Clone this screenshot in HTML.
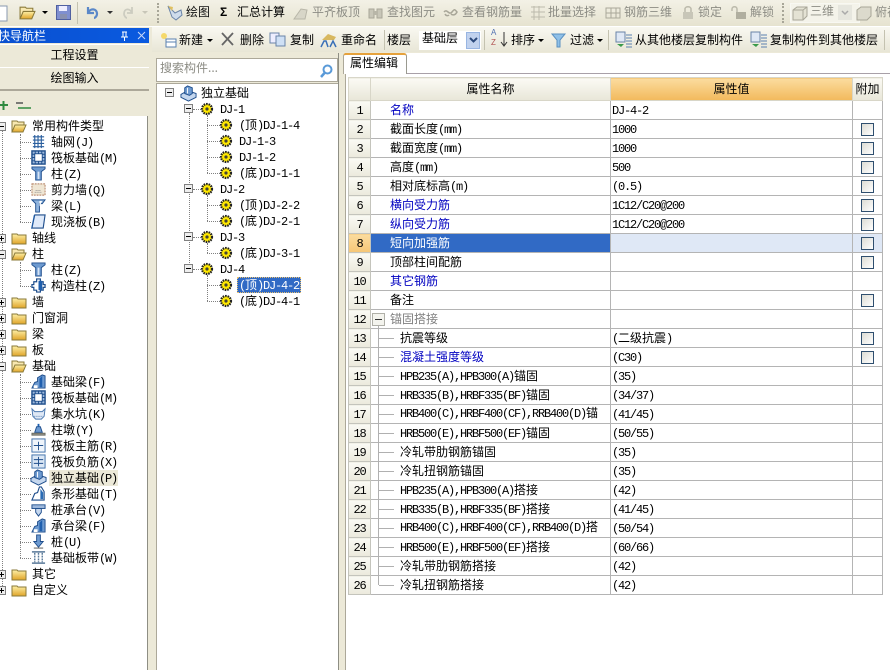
<!DOCTYPE html>
<html><head><meta charset="utf-8">
<style>
html,body{margin:0;padding:0;width:890px;height:670px;overflow:hidden;background:#ece9d8}
body{position:relative;font-family:"WenQuanYi Zen Hei","Noto Sans CJK SC",sans-serif;font-size:12px;color:#000}
.a{position:absolute}
.t{position:absolute;white-space:nowrap;line-height:16px;height:16px}
b{font-family:"Liberation Mono",monospace;font-weight:normal;font-size:12px;letter-spacing:-1.2px;line-height:12px}
.g{color:#8c8c84}
svg{position:absolute;overflow:visible}
table{position:absolute;left:348px;top:77px;border-collapse:collapse;table-layout:fixed;width:534px;background:#fff}
td,th{border:1px solid #b4b4b4;padding:0;height:18px;line-height:14px;white-space:nowrap;overflow:hidden;font-weight:normal;position:relative;vertical-align:middle}
tr.h th{height:22px;border-color:#d8d6c8;background:linear-gradient(#fbfaf4,#e8e6d8)}
tr.h th.v{background:linear-gradient(#fbdc9f,#f2b95c)}
td.n{background:linear-gradient(#fafaf4,#ebe9dc);text-align:center;border-color:#c4c4bc}
td.c{padding-left:19px}
td.s{padding-left:29px}
td.v{padding-left:1px}
td.bl{color:#0000c0}
.hl{background:#316ac5!important;color:#fff}
.cb{position:absolute;left:8px;top:3px;width:11px;height:11px;border:1px solid #2f4f6f;background:linear-gradient(135deg,#dcdcd4,#fff)}
.u{position:relative;top:-1px}
.vl{position:absolute;border-left:1px dotted #808080;width:0}
.hd{position:absolute;border-top:1px dotted #808080;height:0}
</style></head><body>
<svg width="0" height="0" style="position:absolute"><defs>
<linearGradient id="fy" x1="0" y1="0" x2="0" y2="1"><stop offset="0" stop-color="#fdf0a8"/><stop offset="1" stop-color="#e0a428"/></linearGradient>
<symbol id="fc" viewBox="0 0 16 16"><path d="M1 4h5l1 1h8v9H1z" fill="url(#fy)" stroke="#8a7a3a"/></symbol>
<symbol id="fo" viewBox="0 0 16 16"><path d="M1 14V3h5l1 1h6v3" fill="#f8e8b0" stroke="#8a7a3a"/><path d="M1 14l3-7h11l-3 7z" fill="url(#fy)" stroke="#8a7a3a"/></symbol>
<symbol id="pl" viewBox="0 0 9 9"><rect x=".5" y=".5" width="8" height="8" fill="#eee" stroke="#808080"/><path d="M2 4.5h5M4.5 2v5" stroke="#000"/></symbol>
<symbol id="mi" viewBox="0 0 9 9"><rect x=".5" y=".5" width="8" height="8" fill="#eee" stroke="#808080"/><path d="M2 4.5h5" stroke="#000"/></symbol>
<symbol id="gr" viewBox="0 0 14 14"><circle cx="7" cy="7" r="5" fill="#ffe800" stroke="#222" stroke-width="2.200" stroke-dasharray="1.600 .9"/><circle cx="7" cy="7" r="1.600" fill="#443"/></symbol>
<symbol id="gd" viewBox="0 0 16 16"><path d="M2 3h12M2 6.500h12M2 10h12M2 13.500h12M4 1v14M7.500 1v14M11 1v14" stroke="#2a5f9e" stroke-width="1.200" fill="none"/></symbol>
<symbol id="rf" viewBox="0 0 16 16"><rect x="1" y="1" width="14" height="14" fill="#9db8dc" stroke="#1f4e8c" stroke-width="1.500"/><rect x="4" y="4" width="8" height="8" fill="#fff" stroke="#1f4e8c"/><path d="M1 4.500h3M1 8h3M1 11.500h3M12 4.500h3M12 8h3M12 11.500h3M4.500 1v3M8 1v3M11.500 1v3M4.500 12v3M8 12v3M11.500 12v3" stroke="#1f4e8c"/></symbol>
<symbol id="co" viewBox="0 0 16 16"><path d="M1 1h14v2l-4 3v9H5V6L1 3z" fill="#6d9ad0" stroke="#1f4e8c"/><path d="M7 6h2v8H7z" fill="#d6e4f5"/></symbol>
<symbol id="wl" viewBox="0 0 16 16"><rect x="1" y="2" width="14" height="12" fill="#efe6d4" stroke="#b07a5a" stroke-dasharray="2 1"/><path d="M4 11h8M5 9h6" stroke="#888" stroke-dasharray="1 1"/></symbol>
<symbol id="bm" viewBox="0 0 16 16"><path d="M1 2h14l-3 4H9v9H5V6L1 2z" fill="#8fb4de" stroke="#1f4e8c"/><path d="M9 3l3 0-3 6z" fill="#fff"/></symbol>
<symbol id="sl" viewBox="0 0 16 16"><path d="M4 1h11l-2 14H1z" fill="#dfeafa" stroke="#1f4e8c" stroke-width="1.200"/><path d="M1 15l3-14-1 0-3 15z" fill="#1f5fae"/></symbol>
<symbol id="gz" viewBox="0 0 16 16"><path d="M6 1h4v3h3v3h2v3h-2v3h-3v2H6v-2H3v-3H1V7h2V4h3z" fill="#fff" stroke="#1f4e8c" stroke-width="1.300"/><rect x="8" y="3" width="4" height="10" fill="#1f5fae"/></symbol>
<symbol id="fb" viewBox="0 0 16 16"><path d="M1 15l3-6 3-1V4l5-3 3 1v13z" fill="#6d9ad0" stroke="#1f4e8c"/><path d="M9 5l3-3v12H9z" fill="#1f5fae"/><path d="M3 12h4v3H3z" fill="#fff"/></symbol>
<symbol id="sp" viewBox="0 0 16 16"><path d="M1 3l3 3h8l3-3-1 8-3 3H5l-3-3z" fill="#dfe8f5" stroke="#4a78b0"/><path d="M3 11h10" stroke="#4a78b0" stroke-dasharray="1 1"/></symbol>
<symbol id="pr" viewBox="0 0 16 16"><path d="M1 12h14v2H1z" fill="#9a9a90" stroke="#6a6a60"/><path d="M6 5h4l2 6H4z" fill="#6d9ad0" stroke="#1f4e8c"/><path d="M7 2h2v3H7z" fill="#1f5fae"/></symbol>
<symbol id="ra" viewBox="0 0 16 16"><rect x="1" y="1" width="14" height="14" fill="#eef4fb" stroke="#3d6ea8"/><path d="M3 8h10M8 4v9" stroke="#1f4e8c"/></symbol>
<symbol id="rb" viewBox="0 0 16 16"><rect x="1" y="1" width="14" height="14" fill="#dbe7f5" stroke="#3d6ea8"/><path d="M3 6h10M3 10h10M8 3v10" stroke="#1f4e8c"/></symbol>
<symbol id="df" viewBox="0 0 18 18"><path d="M1 10l7-4 9 3v4l-8 4-8-4z" fill="#c5d7ee" stroke="#1f4e8c"/><path d="M5 3l3-2 5 2v6l-3 2-5-2z" fill="#6d9ad0" stroke="#1f4e8c"/><path d="M8 3v6" stroke="#fff"/></symbol>
<symbol id="st" viewBox="0 0 16 16"><path d="M1 15l3-7 3-1 2-6h2l3 5v9z" fill="#fff" stroke="#1f4e8c" stroke-width="1.200"/><path d="M10 3l3 4v7h-3z" fill="#2a6cb6"/></symbol>
<symbol id="pc" viewBox="0 0 16 16"><path d="M1 3h14v4H1z" fill="#9db8dc" stroke="#1f4e8c"/><path d="M5 7h6v4l-3 4-3-4z" fill="#c6d8ef" stroke="#1f4e8c"/></symbol>
<symbol id="pi" viewBox="0 0 16 16"><path d="M6 1h4v7h3l-5 6-5-6h3z" fill="#6d9ad0" stroke="#1f4e8c"/><path d="M3 15h10" stroke="#555"/></symbol>
<symbol id="bd" viewBox="0 0 16 16"><path d="M1 2h14M1 14h14" stroke="#5a7a9a" stroke-width="1.500"/><path d="M4 3v10M8 3v10M12 3v10" stroke="#5a7a9a" stroke-width="1.500" stroke-dasharray="2 1"/></symbol>
<symbol id="cp" viewBox="0 0 18 18"><rect x="1" y="1" width="9" height="10" fill="#dfe8f5" stroke="#6a84a8"/><path d="M2 13h7l-3 3z" fill="#3a9a4a"/><path d="M11 4h6M11 7h6M11 10h6M11 13h6M11 16h6" stroke="#5a80b0"/></symbol>
</defs></svg>

<!-- toolbar 1 -->
<div class="a" style="left:0;top:0;width:890px;height:26px;background:linear-gradient(#f3f1e6,#e6e3d0);border-bottom:1px solid #fff"></div>
<svg style="left:-8px;top:3px" width="18" height="20"><rect x="2" y="3" width="13" height="15" fill="#fff" stroke="#8a9ab0"/></svg>
<svg style="left:19px;top:4px" width="17" height="17"><use href="#fo"/></svg>
<div class="a" style="left:42px;top:11px;border:3px solid transparent;border-top:3px solid #000"></div>
<svg style="left:56px;top:5px" width="15" height="15"><rect x=".5" y=".5" width="14" height="14" fill="#7f8fd0" stroke="#5060a0"/><rect x="3" y="1" width="8" height="5" fill="#eef"/><rect x="4" y="9" width="7" height="5" fill="#8890b0"/></svg>
<div class="a" style="left:77px;top:2px;height:22px;border-left:1px solid #c4c2b0"></div>
<svg style="left:85px;top:5px" width="15" height="15"><path d="M3 2v6h6M3 8c2-5 9-5 9 1 0 2-2 4-3 4" fill="none" stroke="#5b88c8" stroke-width="2.200"/></svg>
<div class="a" style="left:107px;top:11px;border:3px solid transparent;border-top:3px solid #333"></div>
<svg style="left:121px;top:5px" width="14" height="15"><path d="M11 2v6H6M11 8C9 3 3 3 3 9c0 2 2 4 3 4" fill="none" stroke="#ccccc0" stroke-width="1.800"/></svg>
<div class="a" style="left:142px;top:11px;border:3px solid transparent;border-top:3px solid #c8c6b8"></div>
<div class="a" style="left:157px;top:3px;height:20px;border-left:2px dotted #a8a698"></div>
<svg style="left:166px;top:4px" width="18" height="18"><path d="M2 2l7 7 6-3 1 5-6 5-4-3z" fill="#cfdcec" stroke="#6a84a8"/><path d="M2 2l5 1-1 4z" fill="#e0c060"/></svg>
<div class="t" style="left:186px;top:4px;color:#111">绘图</div>
<div class="t" style="left:220px;top:4px;font-weight:bold;font-family:'Liberation Sans'">Σ</div>
<div class="t" style="left:237px;top:4px">汇总计算</div>
<svg style="left:293px;top:5px" width="16" height="16"><path d="M1 14l7-10 6 1-2 9z" fill="#d8d6c8" stroke="#b8b6a8"/></svg>
<div class="t g" style="left:312px;top:4px">平齐板顶</div>
<svg style="left:367px;top:5px" width="17" height="16"><path d="M2 4h5v9H2zM10 4h5v9h-5z" fill="#c8c6b8" stroke="#a8a698"/><rect x="7" y="6" width="3" height="4" fill="#b8b6a8"/></svg>
<div class="t g" style="left:387px;top:4px">查找图元</div>
<svg style="left:443px;top:7px" width="15" height="11"><path d="M1 5c3-4 5 4 8 0s3-2 5 0c-2 4-5 3-6 2M2 7c1 2 3 2 4 1" fill="none" stroke="#a8a698" stroke-width="1.500"/></svg>
<div class="t g" style="left:462px;top:4px">查看钢筋量</div>
<svg style="left:530px;top:5px" width="16" height="16"><path d="M1 2h14M1 7h14M1 12h14M4 1v14M9 1v14" stroke="#bcbaac" fill="none"/></svg>
<div class="t g" style="left:548px;top:4px">批量选择</div>
<svg style="left:605px;top:5px" width="16" height="16"><path d="M1 3h14v10H1zM6 3v10M11 3v10M1 8h14" stroke="#aaa89a" fill="none"/></svg>
<div class="t g" style="left:624px;top:4px">钢筋三维</div>
<svg style="left:681px;top:5px" width="14" height="15"><path d="M4 7V4c0-3 6-3 6 0v3" fill="none" stroke="#bcbaac" stroke-width="1.500"/><rect x="2" y="7" width="10" height="7" fill="#c8c6b8"/></svg>
<div class="t g" style="left:698px;top:4px">锁定</div>
<svg style="left:731px;top:5px" width="16" height="15"><path d="M1 6V4c0-3 5-3 5 0v3" fill="none" stroke="#bcbaac" stroke-width="1.500"/><rect x="5" y="7" width="10" height="7" fill="#b0ae9f"/></svg>
<div class="t g" style="left:750px;top:4px">解锁</div>
<div class="a" style="left:782px;top:3px;height:20px;border-left:2px dotted #a8a698"></div>
<div class="a" style="left:790px;top:3px;width:68px;height:18px;background:#f4f3ea;border:1px solid #f8f8f2"></div>
<svg style="left:792px;top:5px" width="16" height="16"><path d="M1 5l4-3h10v9l-4 4H1zM1 5h10v10M11 5l4-3" fill="#e4e2d4" stroke="#a8a698"/></svg>
<div class="t g" style="left:810px;top:3px">三维</div>
<div class="a" style="left:838px;top:5px;width:14px;height:15px;background:#e6e6de"></div>
<svg style="left:841px;top:10px" width="8" height="6"><path d="M1 1l3 3 3-3" fill="none" stroke="#aaa" stroke-width="1.500"/></svg>
<svg style="left:856px;top:5px" width="16" height="16"><path d="M1 5l4-3h10v9l-4 4H1z" fill="#dcdacc" stroke="#a8a698"/></svg>
<div class="t g" style="left:875px;top:4px">俯视</div>

<!-- toolbar 2 -->
<div class="a" style="left:152px;top:27px;width:738px;height:25px;background:linear-gradient(#f9f8f1,#e8e6d6)"></div>
<svg style="left:160px;top:31px" width="17" height="17"><circle cx="4" cy="5" r="3" fill="#f5d96a"/><rect x="6" y="8" width="10" height="8" fill="#fff" stroke="#5a80b0"/><path d="M6 11h10" stroke="#5a80b0"/></svg>
<div class="t" style="left:179px;top:32px">新建</div>
<div class="a" style="left:207px;top:39px;border:3px solid transparent;border-top:3px solid #000"></div>
<svg style="left:221px;top:32px" width="13" height="14"><path d="M1 1l11 12M12 1L1 13" stroke="#666" stroke-width="1.800"/></svg>
<div class="t" style="left:240px;top:32px">删除</div>
<svg style="left:269px;top:32px" width="17" height="15"><rect x="1" y="1" width="9" height="10" fill="#eef" stroke="#6a84a8"/><rect x="7" y="4" width="9" height="10" fill="#cfe0f5" stroke="#6a84a8"/></svg>
<div class="t" style="left:290px;top:32px">复制</div>
<svg style="left:320px;top:32px" width="18" height="16"><path d="M2 8l6-6 8 3-2 3z" fill="#d8b860"/><path d="M1 15l3-6h2l2 6M10 15l3-6 3 6" fill="none" stroke="#3a70b8" stroke-width="1.500"/></svg>
<div class="t" style="left:341px;top:32px">重命名</div>
<div class="a" style="left:384px;top:30px;height:20px;border-left:1px solid #c4c2b0"></div>
<div class="t" style="left:387px;top:32px">楼层</div>
<div class="a" style="left:419px;top:31px;width:62px;height:19px;background:#fff"></div>
<div class="t" style="left:422px;top:30px">基础层</div>
<div class="a" style="left:466px;top:32px;width:14px;height:17px;background:#c1d2ee;border:1px solid #98b5e2;box-sizing:border-box"></div>
<svg style="left:469px;top:37px" width="9" height="7"><path d="M1 1l3.500 3.500L8 1" fill="none" stroke="#2c4a7c" stroke-width="2"/></svg>
<div class="a" style="left:484px;top:30px;height:20px;border-left:1px solid #c4c2b0"></div>
<div class="t" style="left:491px;top:28px;font:8px/10px 'Liberation Sans';color:#5070b0">A</div>
<div class="t" style="left:491px;top:38px;font:8px/10px 'Liberation Sans';color:#b05050">Z</div>
<svg style="left:500px;top:32px" width="8" height="16"><path d="M4 0v13M1 10l3 4 3-4" fill="none" stroke="#333"/></svg>
<div class="t" style="left:511px;top:32px">排序</div>
<div class="a" style="left:538px;top:39px;border:3px solid transparent;border-top:3px solid #000"></div>
<svg style="left:551px;top:33px" width="15" height="15"><path d="M1 1h13L9 7v7H6V7z" fill="#8fc0e8" stroke="#5a90c0"/></svg>
<div class="t" style="left:570px;top:32px">过滤</div>
<div class="a" style="left:597px;top:39px;border:3px solid transparent;border-top:3px solid #000"></div>
<div class="a" style="left:608px;top:30px;height:20px;border-left:1px solid #c4c2b0"></div>
<svg style="left:615px;top:31px" width="18" height="18"><use href="#cp"/></svg>
<div class="t" style="left:635px;top:32px">从其他楼层复制构件</div>
<svg style="left:750px;top:31px" width="18" height="18"><use href="#cp"/></svg>
<div class="t" style="left:770px;top:32px">复制构件到其他楼层</div>
<div class="a" style="left:884px;top:30px;height:20px;border-left:1px solid #c4c2b0"></div>

<!-- left nav -->
<div class="a" style="left:0;top:28px;width:149px;height:15px;background:linear-gradient(90deg,#0a50d0,#0a5ae0);color:#fff"></div>
<div class="t" style="left:-2px;top:28px;color:#fff;height:15px;line-height:15px">快导航栏</div>
<svg style="left:120px;top:31px" width="9" height="10"><path d="M2 1h5M3 1v5h3V1M1 6h7M4.500 6v4" fill="none" stroke="#fff"/></svg>
<svg style="left:137px;top:31px" width="9" height="9"><path d="M1 1l7 7M8 1L1 8" stroke="#c8d8f8"/></svg>
<div class="a" style="left:0;top:44px;width:149px;height:22px;background:#ece9d8;border-bottom:1px solid #aca899;border-top:1px solid #fff"></div>
<div class="t" style="left:0;width:149px;text-align:center;top:47px">工程设置</div>
<div class="a" style="left:0;top:67px;width:149px;height:21px;background:#ece9d8;border-bottom:2px solid #aca899;border-top:1px solid #fff"></div>
<div class="t" style="left:0;width:149px;text-align:center;top:70px">绘图输入</div>
<svg style="left:0;top:99px" width="32" height="12"><path d="M-1 6h9M3.500 2v9" stroke="#2f8a3f" stroke-width="2"/><path d="M16 4h7" stroke="#555" stroke-width="1.500"/><path d="M18 9h13" stroke="#2f8a3f" stroke-width="1.500"/></svg>
<div class="a" style="left:0;top:116px;width:147px;height:554px;background:#fff"></div>
<div class="a" style="left:147px;top:116px;width:1px;height:554px;background:#8e8e84"></div>

<div class="vl" style="left:2px;top:131px;height:459px"></div>
<div class="vl" style="left:20px;top:134px;height:88px"></div>
<div class="vl" style="left:20px;top:262px;height:24px"></div>
<div class="vl" style="left:20px;top:374px;height:184px"></div>
<div class="hd" style="left:20px;top:142px;width:11px"></div><div class="hd" style="left:20px;top:158px;width:11px"></div><div class="hd" style="left:20px;top:174px;width:11px"></div><div class="hd" style="left:20px;top:190px;width:11px"></div><div class="hd" style="left:20px;top:206px;width:11px"></div><div class="hd" style="left:20px;top:222px;width:11px"></div><div class="hd" style="left:20px;top:270px;width:11px"></div><div class="hd" style="left:20px;top:286px;width:11px"></div>
<div class="hd" style="left:20px;top:382px;width:11px"></div><div class="hd" style="left:20px;top:398px;width:11px"></div><div class="hd" style="left:20px;top:414px;width:11px"></div><div class="hd" style="left:20px;top:430px;width:11px"></div><div class="hd" style="left:20px;top:446px;width:11px"></div><div class="hd" style="left:20px;top:462px;width:11px"></div><div class="hd" style="left:20px;top:478px;width:11px"></div><div class="hd" style="left:20px;top:494px;width:11px"></div><div class="hd" style="left:20px;top:510px;width:11px"></div><div class="hd" style="left:20px;top:526px;width:11px"></div><div class="hd" style="left:20px;top:542px;width:11px"></div><div class="hd" style="left:20px;top:558px;width:11px"></div>

<!-- folders -->
<svg style="left:-3px;top:122px" width="9" height="9"><use href="#mi"/></svg><svg style="left:11px;top:118px" width="16" height="16"><use href="#fo"/></svg><div class="t" style="left:32px;top:118px">常用构件类型</div>
<svg style="left:-3px;top:234px" width="9" height="9"><use href="#pl"/></svg><svg style="left:11px;top:230px" width="16" height="16"><use href="#fc"/></svg><div class="t" style="left:32px;top:230px">轴线</div>
<svg style="left:-3px;top:250px" width="9" height="9"><use href="#mi"/></svg><svg style="left:11px;top:246px" width="16" height="16"><use href="#fo"/></svg><div class="t" style="left:32px;top:246px">柱</div>
<svg style="left:-3px;top:298px" width="9" height="9"><use href="#pl"/></svg><svg style="left:11px;top:294px" width="16" height="16"><use href="#fc"/></svg><div class="t" style="left:32px;top:294px">墙</div>
<svg style="left:-3px;top:314px" width="9" height="9"><use href="#pl"/></svg><svg style="left:11px;top:310px" width="16" height="16"><use href="#fc"/></svg><div class="t" style="left:32px;top:310px">门窗洞</div>
<svg style="left:-3px;top:330px" width="9" height="9"><use href="#pl"/></svg><svg style="left:11px;top:326px" width="16" height="16"><use href="#fc"/></svg><div class="t" style="left:32px;top:326px">梁</div>
<svg style="left:-3px;top:346px" width="9" height="9"><use href="#pl"/></svg><svg style="left:11px;top:342px" width="16" height="16"><use href="#fc"/></svg><div class="t" style="left:32px;top:342px">板</div>
<svg style="left:-3px;top:362px" width="9" height="9"><use href="#mi"/></svg><svg style="left:11px;top:358px" width="16" height="16"><use href="#fo"/></svg><div class="t" style="left:32px;top:358px">基础</div>
<svg style="left:-3px;top:570px" width="9" height="9"><use href="#pl"/></svg><svg style="left:11px;top:566px" width="16" height="16"><use href="#fc"/></svg><div class="t" style="left:32px;top:566px">其它</div>
<svg style="left:-3px;top:586px" width="9" height="9"><use href="#pl"/></svg><svg style="left:11px;top:582px" width="16" height="16"><use href="#fc"/></svg><div class="t" style="left:32px;top:582px">自定义</div>

<!-- items -->
<svg style="left:31px;top:134px" width="15" height="15"><use href="#gd"/></svg><div class="t" style="left:51px;top:134px">轴网<b>(J)</b></div>
<svg style="left:31px;top:150px" width="15" height="15"><use href="#rf"/></svg><div class="t" style="left:51px;top:150px">筏板基础<b>(M)</b></div>
<svg style="left:31px;top:166px" width="15" height="15"><use href="#co"/></svg><div class="t" style="left:51px;top:166px">柱<b>(Z)</b></div>
<svg style="left:31px;top:182px" width="15" height="15"><use href="#wl"/></svg><div class="t" style="left:51px;top:182px">剪力墙<b>(Q)</b></div>
<svg style="left:31px;top:198px" width="15" height="15"><use href="#bm"/></svg><div class="t" style="left:51px;top:198px">梁<b>(L)</b></div>
<svg style="left:31px;top:214px" width="15" height="15"><use href="#sl"/></svg><div class="t" style="left:51px;top:214px">现浇板<b>(B)</b></div>
<svg style="left:31px;top:262px" width="15" height="15"><use href="#co"/></svg><div class="t" style="left:51px;top:262px">柱<b>(Z)</b></div>
<svg style="left:31px;top:278px" width="15" height="15"><use href="#gz"/></svg><div class="t" style="left:51px;top:278px">构造柱<b>(Z)</b></div>
<svg style="left:31px;top:374px" width="15" height="15"><use href="#fb"/></svg><div class="t" style="left:51px;top:374px">基础梁<b>(F)</b></div>
<svg style="left:31px;top:390px" width="15" height="15"><use href="#rf"/></svg><div class="t" style="left:51px;top:390px">筏板基础<b>(M)</b></div>
<svg style="left:31px;top:406px" width="15" height="15"><use href="#sp"/></svg><div class="t" style="left:51px;top:406px">集水坑<b>(K)</b></div>
<svg style="left:31px;top:422px" width="15" height="15"><use href="#pr"/></svg><div class="t" style="left:51px;top:422px">柱墩<b>(Y)</b></div>
<svg style="left:31px;top:438px" width="15" height="15"><use href="#ra"/></svg><div class="t" style="left:51px;top:438px">筏板主筋<b>(R)</b></div>
<svg style="left:31px;top:454px" width="15" height="15"><use href="#rb"/></svg><div class="t" style="left:51px;top:454px">筏板负筋<b>(X)</b></div>
<div class="a" style="left:49px;top:470px;width:69px;height:16px;background:#ece9d8"></div>
<svg style="left:30px;top:469px" width="17" height="17"><use href="#df"/></svg><div class="t" style="left:51px;top:470px">独立基础<b>(P)</b></div>
<svg style="left:31px;top:486px" width="15" height="15"><use href="#st"/></svg><div class="t" style="left:51px;top:486px">条形基础<b>(T)</b></div>
<svg style="left:31px;top:502px" width="15" height="15"><use href="#pc"/></svg><div class="t" style="left:51px;top:502px">桩承台<b>(V)</b></div>
<svg style="left:31px;top:518px" width="15" height="15"><use href="#fb"/></svg><div class="t" style="left:51px;top:518px">承台梁<b>(F)</b></div>
<svg style="left:31px;top:534px" width="15" height="15"><use href="#pi"/></svg><div class="t" style="left:51px;top:534px">桩<b>(U)</b></div>
<svg style="left:31px;top:550px" width="15" height="15"><use href="#bd"/></svg><div class="t" style="left:51px;top:550px">基础板带<b>(W)</b></div>

<!-- middle -->
<div class="a" style="left:156px;top:58px;width:182px;height:24px;background:#fff;border:1px solid #aca899;box-sizing:border-box"></div>
<div class="t g" style="left:160px;top:60px">搜索构件...</div>
<svg style="left:319px;top:64px" width="15" height="15"><circle cx="8.500" cy="5.500" r="4" fill="#fff" stroke="#5a9ad8" stroke-width="2"/><path d="M5.500 9L2 13" stroke="#5a9ad8" stroke-width="2.500"/></svg>
<div class="a" style="left:156px;top:83px;width:182px;height:587px;background:#fff;border-left:1px solid #aca899;border-top:1px solid #aca899;box-sizing:border-box"></div>
<div class="a" style="left:338px;top:53px;width:1px;height:617px;background:#8e8e84"></div>
<div class="vl" style="left:189px;top:113px;height:156px"></div>
<div class="vl" style="left:207px;top:115px;height:58px"></div><div class="vl" style="left:207px;top:195px;height:26px"></div><div class="vl" style="left:207px;top:243px;height:10px"></div><div class="vl" style="left:207px;top:275px;height:26px"></div>
<div class="hd" style="left:193px;top:109px;width:8px"></div><div class="hd" style="left:193px;top:189px;width:8px"></div><div class="hd" style="left:193px;top:237px;width:8px"></div><div class="hd" style="left:193px;top:269px;width:8px"></div>
<div class="hd" style="left:207px;top:125px;width:13px"></div><div class="hd" style="left:207px;top:141px;width:13px"></div><div class="hd" style="left:207px;top:157px;width:13px"></div><div class="hd" style="left:207px;top:173px;width:13px"></div><div class="hd" style="left:207px;top:205px;width:13px"></div><div class="hd" style="left:207px;top:221px;width:13px"></div><div class="hd" style="left:207px;top:253px;width:13px"></div><div class="hd" style="left:207px;top:285px;width:13px"></div><div class="hd" style="left:207px;top:301px;width:13px"></div>
<svg style="left:165px;top:88px" width="9" height="9"><use href="#mi"/></svg>
<svg style="left:180px;top:85px" width="17" height="17"><use href="#df"/></svg>
<div class="t" style="left:201px;top:85px">独立基础</div>

<svg style="left:184px;top:104px" width="9" height="9"><use href="#mi"/></svg><svg style="left:200px;top:102px" width="14" height="14"><use href="#gr"/></svg><div class="t" style="left:220px;top:101px"><b>DJ-1</b></div>
<svg style="left:219px;top:118px" width="14" height="14"><use href="#gr"/></svg><div class="t" style="left:239px;top:117px"><b>(</b>顶<b>)DJ-1-4</b></div>
<svg style="left:219px;top:134px" width="14" height="14"><use href="#gr"/></svg><div class="t" style="left:239px;top:133px"><b>DJ-1-3</b></div>
<svg style="left:219px;top:150px" width="14" height="14"><use href="#gr"/></svg><div class="t" style="left:239px;top:149px"><b>DJ-1-2</b></div>
<svg style="left:219px;top:166px" width="14" height="14"><use href="#gr"/></svg><div class="t" style="left:239px;top:165px"><b>(</b>底<b>)DJ-1-1</b></div>
<svg style="left:184px;top:184px" width="9" height="9"><use href="#mi"/></svg><svg style="left:200px;top:182px" width="14" height="14"><use href="#gr"/></svg><div class="t" style="left:220px;top:181px"><b>DJ-2</b></div>
<svg style="left:219px;top:198px" width="14" height="14"><use href="#gr"/></svg><div class="t" style="left:239px;top:197px"><b>(</b>顶<b>)DJ-2-2</b></div>
<svg style="left:219px;top:214px" width="14" height="14"><use href="#gr"/></svg><div class="t" style="left:239px;top:213px"><b>(</b>底<b>)DJ-2-1</b></div>
<svg style="left:184px;top:232px" width="9" height="9"><use href="#mi"/></svg><svg style="left:200px;top:230px" width="14" height="14"><use href="#gr"/></svg><div class="t" style="left:220px;top:229px"><b>DJ-3</b></div>
<svg style="left:219px;top:246px" width="14" height="14"><use href="#gr"/></svg><div class="t" style="left:239px;top:245px"><b>(</b>底<b>)DJ-3-1</b></div>
<svg style="left:184px;top:264px" width="9" height="9"><use href="#mi"/></svg><svg style="left:200px;top:262px" width="14" height="14"><use href="#gr"/></svg><div class="t" style="left:220px;top:261px"><b>DJ-4</b></div>
<svg style="left:219px;top:278px" width="14" height="14"><use href="#gr"/></svg>
<div class="a" style="left:237px;top:277px;width:64px;height:16px;background:#316ac5;outline:1px dotted #e8c070;outline-offset:-1px"></div>
<div class="t" style="left:239px;top:277px;color:#fff"><b>(</b>顶<b>)DJ-4-2</b></div>
<svg style="left:219px;top:294px" width="14" height="14"><use href="#gr"/></svg><div class="t" style="left:239px;top:293px"><b>(</b>底<b>)DJ-4-1</b></div>

<!-- right -->
<div class="a" style="left:345px;top:53px;width:545px;height:617px;background:#fff;border-left:1px solid #aca899;box-sizing:border-box"></div>
<div class="a" style="left:346px;top:73px;width:544px;height:1px;background:#a8a0a8"></div>
<div class="a" style="left:343px;top:53px;width:64px;height:21px;background:#fff;border-top:2px solid #e6a23c;border-right:1px solid #9a9a90;border-left:1px solid #aca899;box-sizing:border-box;border-radius:3px 3px 0 0"></div>
<div class="t" style="left:350px;top:55px">属性编辑</div>

<table>
<colgroup><col style="width:22px"><col style="width:240px"><col style="width:242px"><col style="width:30px"></colgroup>
<tr class="h"><th></th><th>属性名称</th><th class="v">属性值</th><th>附加</th></tr>
<tr><td class="n"><b>1</b></td><td class="c bl">名称</td><td class="v"><b>DJ-4-2</b></td><td></td></tr>
<tr><td class="n"><b>2</b></td><td class="c">截面长度<b>(mm)</b></td><td class="v"><b>1000</b></td><td><i class="cb"></i></td></tr>
<tr><td class="n"><b>3</b></td><td class="c">截面宽度<b>(mm)</b></td><td class="v"><b>1000</b></td><td><i class="cb"></i></td></tr>
<tr><td class="n"><b>4</b></td><td class="c">高度<b>(mm)</b></td><td class="v"><b>500</b></td><td><i class="cb"></i></td></tr>
<tr><td class="n"><b>5</b></td><td class="c">相对底标高<b>(m)</b></td><td class="v"><b>(0.5)</b></td><td><i class="cb"></i></td></tr>
<tr><td class="n"><b>6</b></td><td class="c bl">横向受力筋</td><td class="v"><b>1C12/C20@200</b></td><td><i class="cb"></i></td></tr>
<tr><td class="n"><b>7</b></td><td class="c bl">纵向受力筋</td><td class="v"><b>1C12/C20@200</b></td><td><i class="cb"></i></td></tr>
<tr><td class="n" style="background:linear-gradient(#fbdc9f,#f6c676)"><b>8</b></td><td class="c hl">短向加强筋</td><td class="v" style="background:#dfe8f6"></td><td style="background:#dfe8f6"><i class="cb"></i></td></tr>
<tr><td class="n"><b>9</b></td><td class="c">顶部柱间配筋</td><td class="v"></td><td><i class="cb"></i></td></tr>
<tr><td class="n"><b>10</b></td><td class="c bl">其它钢筋</td><td class="v"></td><td></td></tr>
<tr><td class="n"><b>11</b></td><td class="c">备注</td><td class="v"></td><td><i class="cb"></i></td></tr>
<tr><td class="n"><b>12</b></td><td class="c" style="color:#808080">锚固搭接</td><td class="v"></td><td></td></tr>
<tr><td class="n"><b>13</b></td><td class="s">抗震等级</td><td class="v"><b>(</b>二级抗震<b>)</b></td><td><i class="cb"></i></td></tr>
<tr><td class="n"><b>14</b></td><td class="s bl">混凝土强度等级</td><td class="v"><b>(C30)</b></td><td><i class="cb"></i></td></tr>
<tr><td class="n"><b>15</b></td><td class="s"><b>HPB235(A),HPB300(A)</b>锚固</td><td class="v"><b>(35)</b></td><td></td></tr>
<tr><td class="n"><b>16</b></td><td class="s"><b>HRB335(B),HRBF335(BF)</b>锚固</td><td class="v"><b>(34/37)</b></td><td></td></tr>
<tr><td class="n"><b>17</b></td><td class="s"><span class="u"><b>HRB400(C),HRBF400(CF),RRB400(D)</b>锚</span></td><td class="v"><b>(41/45)</b></td><td></td></tr>
<tr><td class="n"><b>18</b></td><td class="s"><b>HRB500(E),HRBF500(EF)</b>锚固</td><td class="v"><b>(50/55)</b></td><td></td></tr>
<tr><td class="n"><b>19</b></td><td class="s">冷轧带肋钢筋锚固</td><td class="v"><b>(35)</b></td><td></td></tr>
<tr><td class="n"><b>20</b></td><td class="s">冷轧扭钢筋锚固</td><td class="v"><b>(35)</b></td><td></td></tr>
<tr><td class="n"><b>21</b></td><td class="s"><b>HPB235(A),HPB300(A)</b>搭接</td><td class="v"><b>(42)</b></td><td></td></tr>
<tr><td class="n"><b>22</b></td><td class="s"><b>HRB335(B),HRBF335(BF)</b>搭接</td><td class="v"><b>(41/45)</b></td><td></td></tr>
<tr><td class="n"><b>23</b></td><td class="s"><span class="u"><b>HRB400(C),HRBF400(CF),RRB400(D)</b>搭</span></td><td class="v"><b>(50/54)</b></td><td></td></tr>
<tr><td class="n"><b>24</b></td><td class="s"><b>HRB500(E),HRBF500(EF)</b>搭接</td><td class="v"><b>(60/66)</b></td><td></td></tr>
<tr><td class="n"><b>25</b></td><td class="s">冷轧带肋钢筋搭接</td><td class="v"><b>(42)</b></td><td></td></tr>
<tr><td class="n"><b>26</b></td><td class="s">冷轧扭钢筋搭接</td><td class="v"><b>(42)</b></td><td></td></tr>
</table>
<svg style="left:372px;top:313px" width="13" height="13"><rect x=".5" y=".5" width="12" height="12" fill="#f4f4ee" stroke="#b0b0a8"/><path d="M3 6.500h7" stroke="#333"/></svg>
<div class="a" style="left:378px;top:326px;width:1px;height:259px;background:#b0b0b0"></div>
<svg style="left:379px;top:330px" width="16" height="258"><path d="M0 8.500h15M0 27.500h15M0 46.500h15M0 65.500h15M0 84.500h15M0 103.500h15M0 122.500h15M0 141.500h15M0 160.500h15M0 179.500h15M0 198.500h15M0 217.500h15M0 236.500h15M0 255.500h15" stroke="#b0b0b0"/></svg>
</body></html>
